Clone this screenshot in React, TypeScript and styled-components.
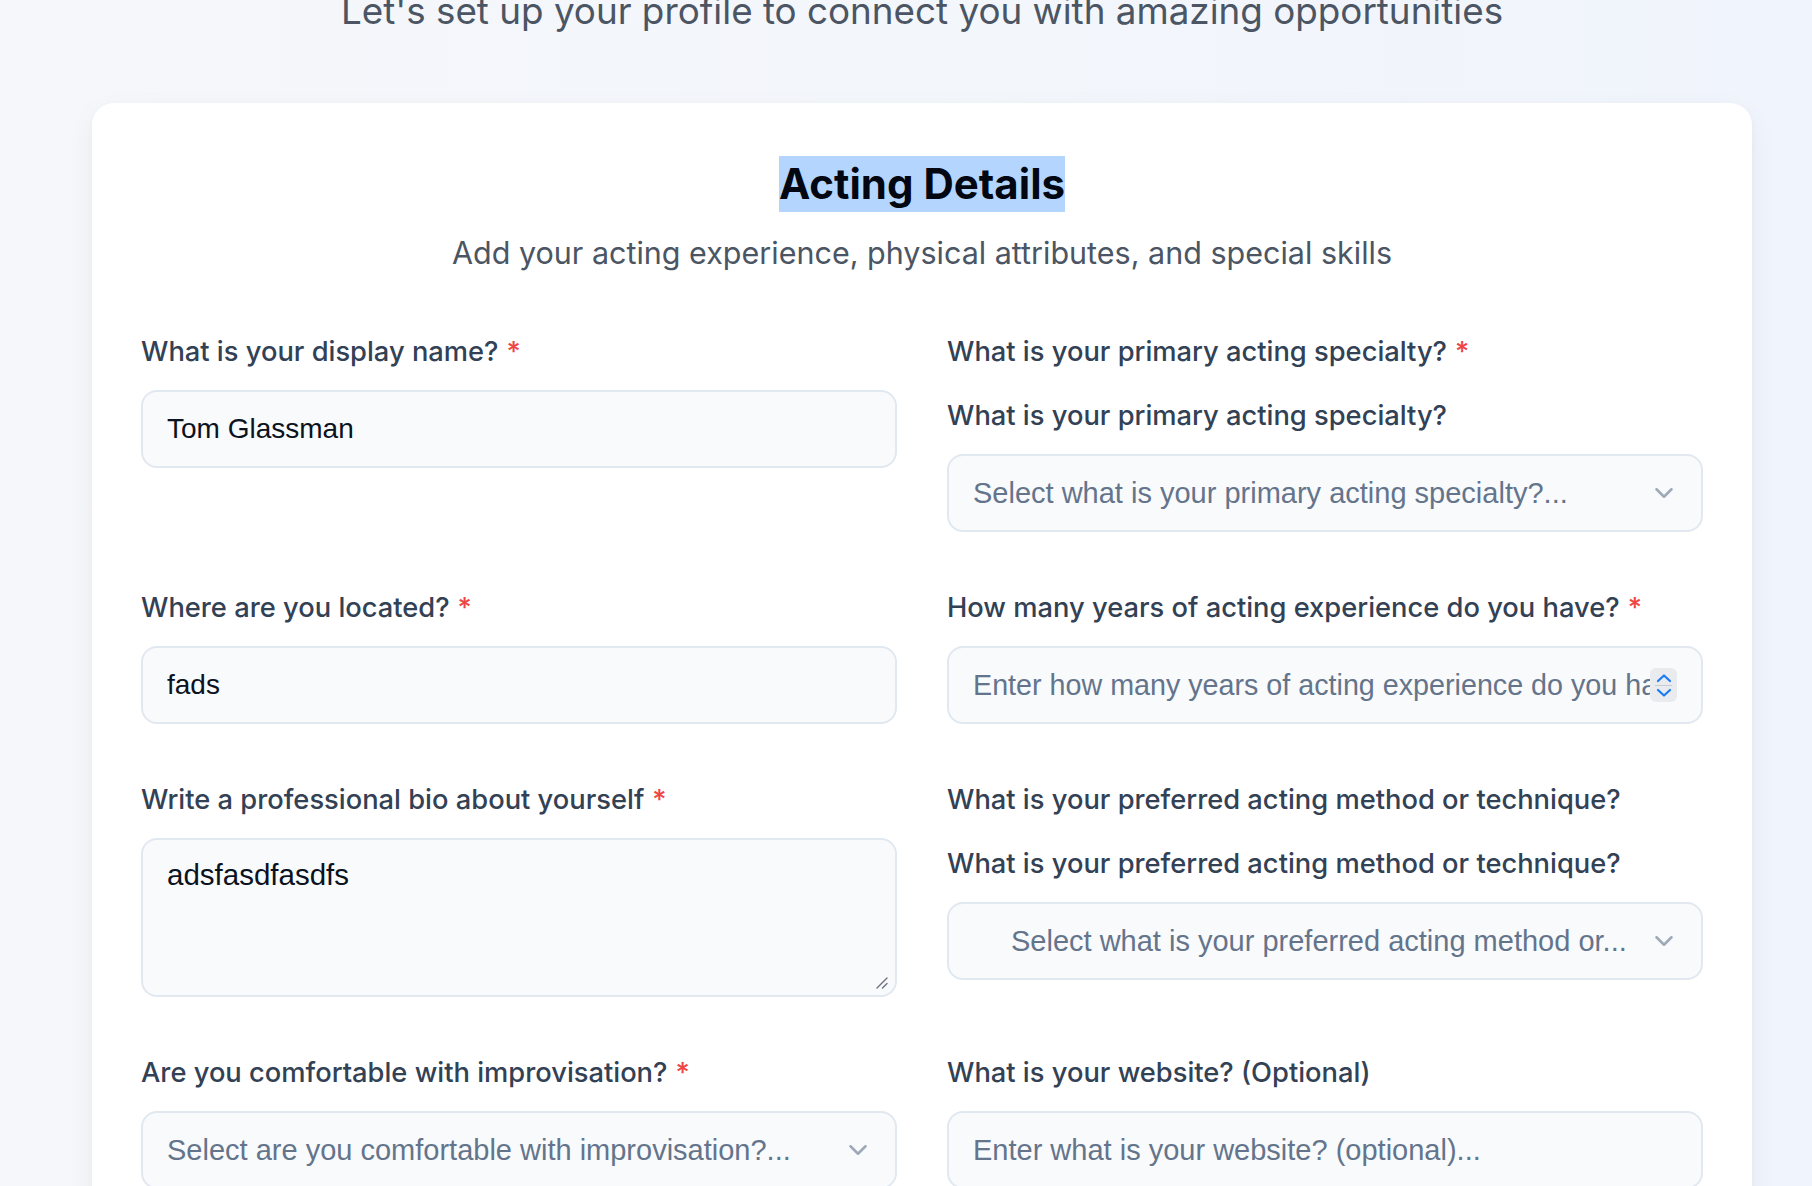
import React from "react";
import styled, { createGlobalStyle, css } from "styled-components";
import { ChevronDown } from "lucide-react";

const GlobalStyle = createGlobalStyle`
  html, body { margin: 0; padding: 0; }
  body {
    background: linear-gradient(90deg, #f5f7fa 0%, #f3f6fb 55%, #f0f4fc 100%);
    font-family: Inter, "Noto Sans", sans-serif;
    overflow: hidden;
  }
  * { box-sizing: border-box; }
`;

const Page = styled.div`
  min-height: 1186px;
  padding: 0 60px 0 92px;
  display: flex;
  flex-direction: column;
`;

const Intro = styled.p`
  margin: -15px 0 66px;
  text-align: center;
  font-size: 36.8px;
  line-height: 52px;
  font-weight: 400;
  color: #4b5563;
`;

const Card = styled.section`
  background: #ffffff;
  border-radius: 22px;
  box-shadow: 0 2px 6px rgba(15, 23, 42, 0.03), 0 10px 30px rgba(15, 23, 42, 0.05);
  padding: 53px 49px 120px;
`;

const CardHeader = styled.header`
  display: flex;
  flex-direction: column;
  align-items: center;
  gap: 20px;
  margin-bottom: 60px;
`;

const Title = styled.h2`
  margin: 0;
  font-size: 42px;
  line-height: 56px;
  font-weight: 700;
  color: #030712;
  letter-spacing: 0;
`;

const Highlight = styled.span`
  display: inline-block;
  background: #b4d6fe;
`;

const Subtitle = styled.p`
  margin: 0;
  font-size: 30.5px;
  line-height: 42px;
  color: #4b5563;
`;

const FormGrid = styled.div`
  display: grid;
  grid-template-columns: 1fr 1fr;
  column-gap: 50px;
  row-gap: 58px;
  align-items: start;
`;

const Field = styled.div<{ $gap?: number }>`
  display: flex;
  flex-direction: column;
  gap: ${(p) => p.$gap ?? 21}px;
`;

const Label = styled.label`
  font-size: 27.3px;
  line-height: 35px;
  font-weight: 500;
  color: #334155;
`;

const Required = styled.span`
  color: #ef4444;
  margin-left: 8px;
`;

const boxBase = css`
  width: 100%;
  border: 2px solid #e2e8f0;
  border-radius: 16px;
  background: #f8fafc;
  font-family: "Liberation Sans", Arial, sans-serif;
  font-size: 28px;
  color: #0b1220;
  outline: none;
`;

const TextInput = styled.input<{ $size?: number }>`
  ${boxBase}
  height: 78px;
  padding: 0 24px;
  font-size: ${(p) => p.$size ?? 28}px;
  &::placeholder {
    color: #64748b;
  }
`;

const AreaWrap = styled.div`
  position: relative;
`;

const TextArea = styled.textarea`
  ${boxBase}
  height: 159px;
  padding: 14px 24px;
  font-size: 29.5px;
  line-height: 42px;
  resize: none;
  display: block;
`;

const Grip = styled.svg`
  position: absolute;
  right: 9px;
  bottom: 8px;
  pointer-events: none;
`;

const SelectTrigger = styled.button`
  ${boxBase}
  height: 78px;
  padding: 0 22px 0 24px;
  display: flex;
  align-items: center;
  gap: 12px;
  cursor: pointer;
  text-align: left;
  font-size: 29px;
`;

const SelectValue = styled.span<{ $indent?: number }>`
  flex: 1;
  min-width: 0;
  padding-left: ${(p) => p.$indent ?? 0}px;
  white-space: nowrap;
  overflow: hidden;
  text-overflow: ellipsis;
  color: #64748b;
`;

const Chevron = styled(ChevronDown)`
  flex: none;
  color: #64748b;
  opacity: 0.6;
`;

const NumberBox = styled.div`
  ${boxBase}
  height: 78px;
  padding: 0 24px 0 24px;
  display: flex;
  align-items: center;
  font-size: 28.7px;
`;

const BareInput = styled.input`
  flex: 1;
  min-width: 0;
  border: 0;
  padding: 0;
  background: transparent;
  font: inherit;
  color: inherit;
  outline: none;
  &::placeholder {
    color: #64748b;
  }
`;

const Spinner = styled.div`
  flex: none;
  width: 27px;
  height: 34px;
  border-radius: 6px;
  background: #e9ebef;
  display: flex;
  flex-direction: column;
  align-items: center;
  justify-content: center;
  gap: 1px;
`;

const SpinDivider = styled.div`
  width: 17px;
  height: 1px;
  background: #c9ccd2;
`;

const SpinArrow = ({ up }: { up?: boolean }) => (
  <svg width="18" height="12" viewBox="0 0 18 12" fill="none">
    <path
      d={up ? "M3 9 L9 3.5 L15 9" : "M3 3 L9 8.5 L15 3"}
      stroke="#1a7cf5"
      strokeWidth="2.2"
      strokeLinecap="round"
      strokeLinejoin="round"
    />
  </svg>
);

const Select = ({ text, indent }: { text: string; indent?: number }) => (
  <SelectTrigger type="button">
    <SelectValue $indent={indent}>{text}</SelectValue>
    <Chevron size={30} strokeWidth={2} />
  </SelectTrigger>
);

const Req = () => <Required>*</Required>;

export default function App() {
  return (
    <>
      <GlobalStyle />
      <Page>
        <Intro>Let's set up your profile to connect you with amazing opportunities</Intro>
        <Card>
          <CardHeader>
            <Title>
              <Highlight>Acting Details</Highlight>
            </Title>
            <Subtitle>Add your acting experience, physical attributes, and special skills</Subtitle>
          </CardHeader>
          <FormGrid>
            <Field>
              <Label>
                What is your display name?<Req />
              </Label>
              <TextInput defaultValue="Tom Glassman" />
            </Field>

            <Field $gap={29}>
              <Label>
                What is your primary acting specialty?<Req />
              </Label>
              <Field>
                <Label>What is your primary acting specialty?</Label>
                <Select text="Select what is your primary acting specialty?..." />
              </Field>
            </Field>

            <Field>
              <Label>
                Where are you located?<Req />
              </Label>
              <TextInput defaultValue="fads" />
            </Field>

            <Field>
              <Label>
                How many years of acting experience do you have?<Req />
              </Label>
              <NumberBox>
                <BareInput placeholder="Enter how many years of acting experience do you have?..." />
                <Spinner>
                  <SpinArrow up />
                  <SpinDivider />
                  <SpinArrow />
                </Spinner>
              </NumberBox>
            </Field>

            <Field>
              <Label>
                Write a professional bio about yourself<Req />
              </Label>
              <AreaWrap>
                <TextArea defaultValue="adsfasdfasdfs" />
                <Grip width="14" height="14" viewBox="0 0 14 14" fill="none">
                  <path d="M13 3 L3 13 M13 8.5 L8.5 13" stroke="#6b7280" strokeWidth="1.4" strokeLinecap="round" />
                </Grip>
              </AreaWrap>
            </Field>

            <Field $gap={29}>
              <Label>What is your preferred acting method or technique?</Label>
              <Field>
                <Label>What is your preferred acting method or technique?</Label>
                <Select indent={38} text="Select what is your preferred acting method or..." />
              </Field>
            </Field>

            <Field>
              <Label>
                Are you comfortable with improvisation?<Req />
              </Label>
              <Select text="Select are you comfortable with improvisation?..." />
            </Field>

            <Field>
              <Label>What is your website? (Optional)</Label>
              <TextInput $size={29} placeholder="Enter what is your website? (optional)..." />
            </Field>
          </FormGrid>
        </Card>
      </Page>
    </>
  );
}
